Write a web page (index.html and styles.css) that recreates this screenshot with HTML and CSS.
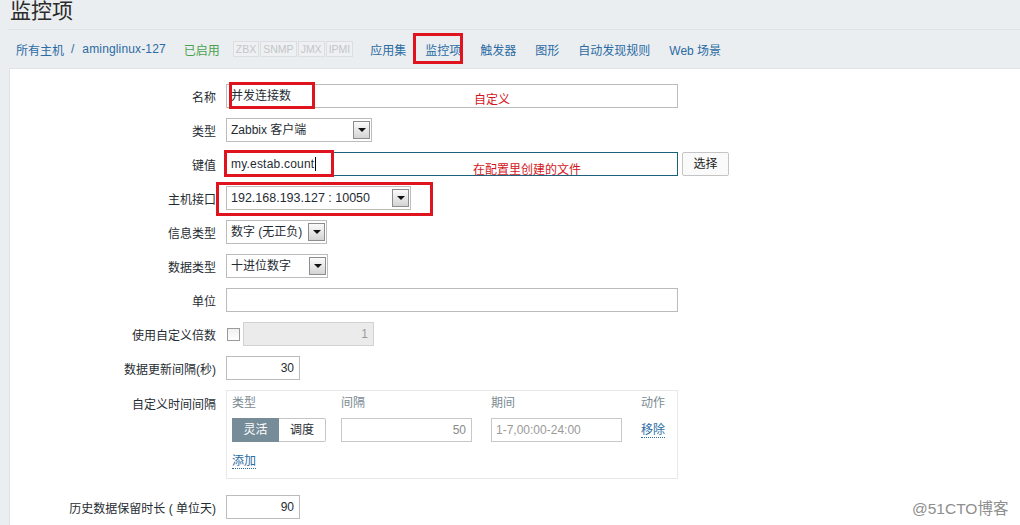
FILE: index.html
```html
<!DOCTYPE html>
<html lang="zh-CN">
<head>
<meta charset="utf-8">
<title>监控项</title>
<link rel="stylesheet" href="styles.css">
</head>
<body>
<div class="page">
  <div class="title">监控项</div>
  <div class="nav">
    <a class="lnk crumb">所有主机</a><span class="sep">/</span><a class="lnk host">aminglinux-127</a>
    <span class="enabled">已启用</span>
    <span class="tags"><span class="tag">ZBX</span><span class="tag">SNMP</span><span class="tag">JMX</span><span class="tag">IPMI</span></span>
    <a class="lnk item first">应用集</a>
    <a class="lnk item cur">监控项</a>
    <a class="lnk item">触发器</a>
    <a class="lnk item">图形</a>
    <a class="lnk item">自动发现规则</a>
    <a class="lnk item">Web 场景</a>
  </div>
  <div class="panel">
    <div class="row"><label>名称</label><div class="input wide">并发连接数</div></div>
    <div class="row"><label>类型</label><div class="select w145">Zabbix 客户端<span class="arrow"></span></div></div>
    <div class="row"><label>键值</label><div class="keyline"><div class="input wide focus">my.estab.count<span class="caret"></span></div><span class="btn">选择</span></div></div>
    <div class="row"><label>主机接口</label><div class="select w184 big">192.168.193.127 : 10050<span class="arrow"></span></div></div>
    <div class="row"><label>信息类型</label><div class="select w100">数字 (无正负)<span class="arrow"></span></div></div>
    <div class="row"><label>数据类型</label><div class="select w101">十进位数字<span class="arrow"></span></div></div>
    <div class="row"><label>单位</label><div class="input wide"></div></div>
    <div class="row"><label>使用自定义倍数</label><div class="mult"><span class="check"></span><div class="input disabled num">1</div></div></div>
    <div class="row"><label>数据更新间隔(秒)</label><div class="input short num">30</div></div>
    <div class="row top"><label>自定义时间间隔</label>
      <div class="tbox">
        <div class="tgrid">
          <span class="th">类型</span><span class="th">间隔</span><span class="th">期间</span><span class="th">动作</span>
          <span class="toggle"><span class="on">灵活</span><span class="off">调度</span></span>
          <div class="input mid num grey">50</div>
          <div class="input mid ph">1-7,00:00-24:00</div>
          <a class="lnk dotted rm">移除</a>
        </div>
        <a class="lnk dotted add">添加</a>
      </div>
    </div>
    <div class="row last"><label>历史数据保留时长 ( 单位天)</label><div class="input short num">90</div></div>
  </div>

  <div class="mark m-nav"></div>
  <div class="mark m-name"></div>
  <div class="mark m-key"></div>
  <div class="mark m-iface"></div>
  <div class="note n1">自定义</div>
  <div class="note n2">在配置里创建的文件</div>
  <div class="wm">@51CTO博客</div>
</div>
</body>
</html>
```
FILE: styles.css
```css
* { box-sizing: border-box; }
html, body { margin: 0; padding: 0; }
body {
  width: 1020px; height: 525px; overflow: hidden;
  background: #ebeef0;
  font-family: "Liberation Sans", Arial, "Noto Sans CJK SC", sans-serif;
  font-size: 12px; color: #1f2c33;
}
.page { position: relative; width: 1020px; height: 525px; }
.title {
  margin-left: 8px; height: 30px; padding-left: 2px;
  border-bottom: 1px solid #dde2e5;
  font-size: 21px; line-height: 22px; color: #2b2b2b;
  overflow: hidden;
}
.nav {
  height: 38px; display: flex; align-items: center;
  padding-left: 16px; white-space: nowrap;
}
.lnk { color: #2a6ba4; text-decoration: none; }
.host { letter-spacing: 0.15px; }
.sep { color: #2a6ba4; margin: 0 8px 0 7px; }
.enabled { color: #4aa24e; margin-left: 18px; }
.tags { display: flex; margin-left: 13px; }
.tag {
  font-size: 10.5px; color: #c3c6c8; border: 1px solid #dcdfe1;
  height: 16px; line-height: 14px; padding: 0 2px; margin-right: 1px;
  background: #eef0f2;
}
.item { margin-left: 19px; }
.item.first { margin-left: 16px; }
.panel {
  margin-left: 9px; height: 457px; background: #fff;
  border-top: 1px solid #e0e4e7; border-left: 1px solid #e0e4e7;
  padding-top: 15px;
}
.row {
  display: grid; grid-template-columns: 206px auto; column-gap: 10px;
  align-items: center; margin-bottom: 10px;
}
.row.top { align-items: start; }
.row.top label { padding-top: 5px; }
.row label { text-align: right; white-space: nowrap; }
.row.last { margin-top: 16px; }
.input {
  height: 24px; border: 1px solid #bcbcbc; background: #fff;
  padding: 0 4px; line-height: 22px; white-space: nowrap; position: relative;
}
.wide { width: 452px; }
.short { width: 74px; }
.mid { width: 131px; }
.num { text-align: right; padding-right: 5px; }
.focus { border-color: #1e5f79; letter-spacing: 0.2px; }
.caret { display: inline-block; width: 1px; height: 14px; background: #000; vertical-align: -3px; margin-left: 1px; }
.keyline { display: flex; align-items: center; }
.btn {
  margin-left: 4px; width: 47px; height: 24px; border: 1px solid #c4c4c4;
  border-radius: 2px; text-align: center; line-height: 22px; background: #fafafa; color: #222;
}
.select {
  position: relative; height: 24px; border: 1px solid #bcbcbc; background: #fff;
  padding-left: 4px; line-height: 22px; white-space: nowrap;
}
.select.big { font-size: 12.5px; }
.w145 { width: 146px; }
.w184 { width: 185px; }
.w100 { width: 101px; }
.w101 { width: 102px; }
.arrow {
  position: absolute; right: 1px; top: 2px; width: 17px; height: 18px;
  border: 1px solid #8d8d8d;
  background: linear-gradient(#fbfbfb, #d4d4d4);
}
.arrow::after {
  content: ""; position: absolute; left: 4px; top: 6px;
  border-left: 4px solid transparent; border-right: 4px solid transparent;
  border-top: 4px solid #111;
}
.mult { display: flex; align-items: center; }
.check {
  width: 13px; height: 13px; border: 1px solid #9a9a9a; margin-left: 1px;
  background: linear-gradient(#f0f0f0, #fff);
}
.disabled {
  margin-left: 3px; width: 131px; background: #ebebeb; border-color: #d2d2d2; color: #9a9a9a;
}
.tbox {
  width: 452px; height: 89px; border: 1px solid #e6e8ea;
  padding: 4px 0 0 5px;
}
.tgrid {
  display: grid; grid-template-columns: 109px 150px 150px auto;
  grid-template-rows: 16px 24px; row-gap: 7px; align-items: center;
}
.th { color: #7a8a93; line-height: 16px; }
.toggle { display: flex; height: 24px; }
.toggle span { width: 47px; text-align: center; line-height: 22px; border: 1px solid #768d99; }
.toggle .on { background: #768d99; color: #fff; }
.toggle .off { border-color: #c5c5c5; border-left: none; color: #1f2c33; border-radius: 0 2px 2px 0; }
.grey { color: #8a8a8a; border-color: #c8c8c8; }
.ph { color: #9a9a9a; border-color: #c8c8c8; }
.dotted { border-bottom: 1px dotted #2a6ba4; line-height: 14px; }
.rm { justify-self: start; }
.add { display: inline-block; margin-top: 12px; }
.mark { position: absolute; border: 3px solid #e0141e; }
.m-nav { left: 413px; top: 33px; width: 50px; height: 31px; }
.m-name { left: 229px; top: 82px; width: 86px; height: 27px; }
.m-key { left: 224px; top: 150px; width: 110px; height: 27px; }
.m-iface { left: 216px; top: 182px; width: 217px; height: 34px; }
.note { position: absolute; color: #d4141c; font-size: 12px; line-height: 14px; }
.n1 { left: 474px; top: 93px; }
.n2 { left: 473px; top: 163px; }
.wm { position: absolute; left: 912px; top: 496px; color: #8e8e8e; font-size: 15.5px; }
```
